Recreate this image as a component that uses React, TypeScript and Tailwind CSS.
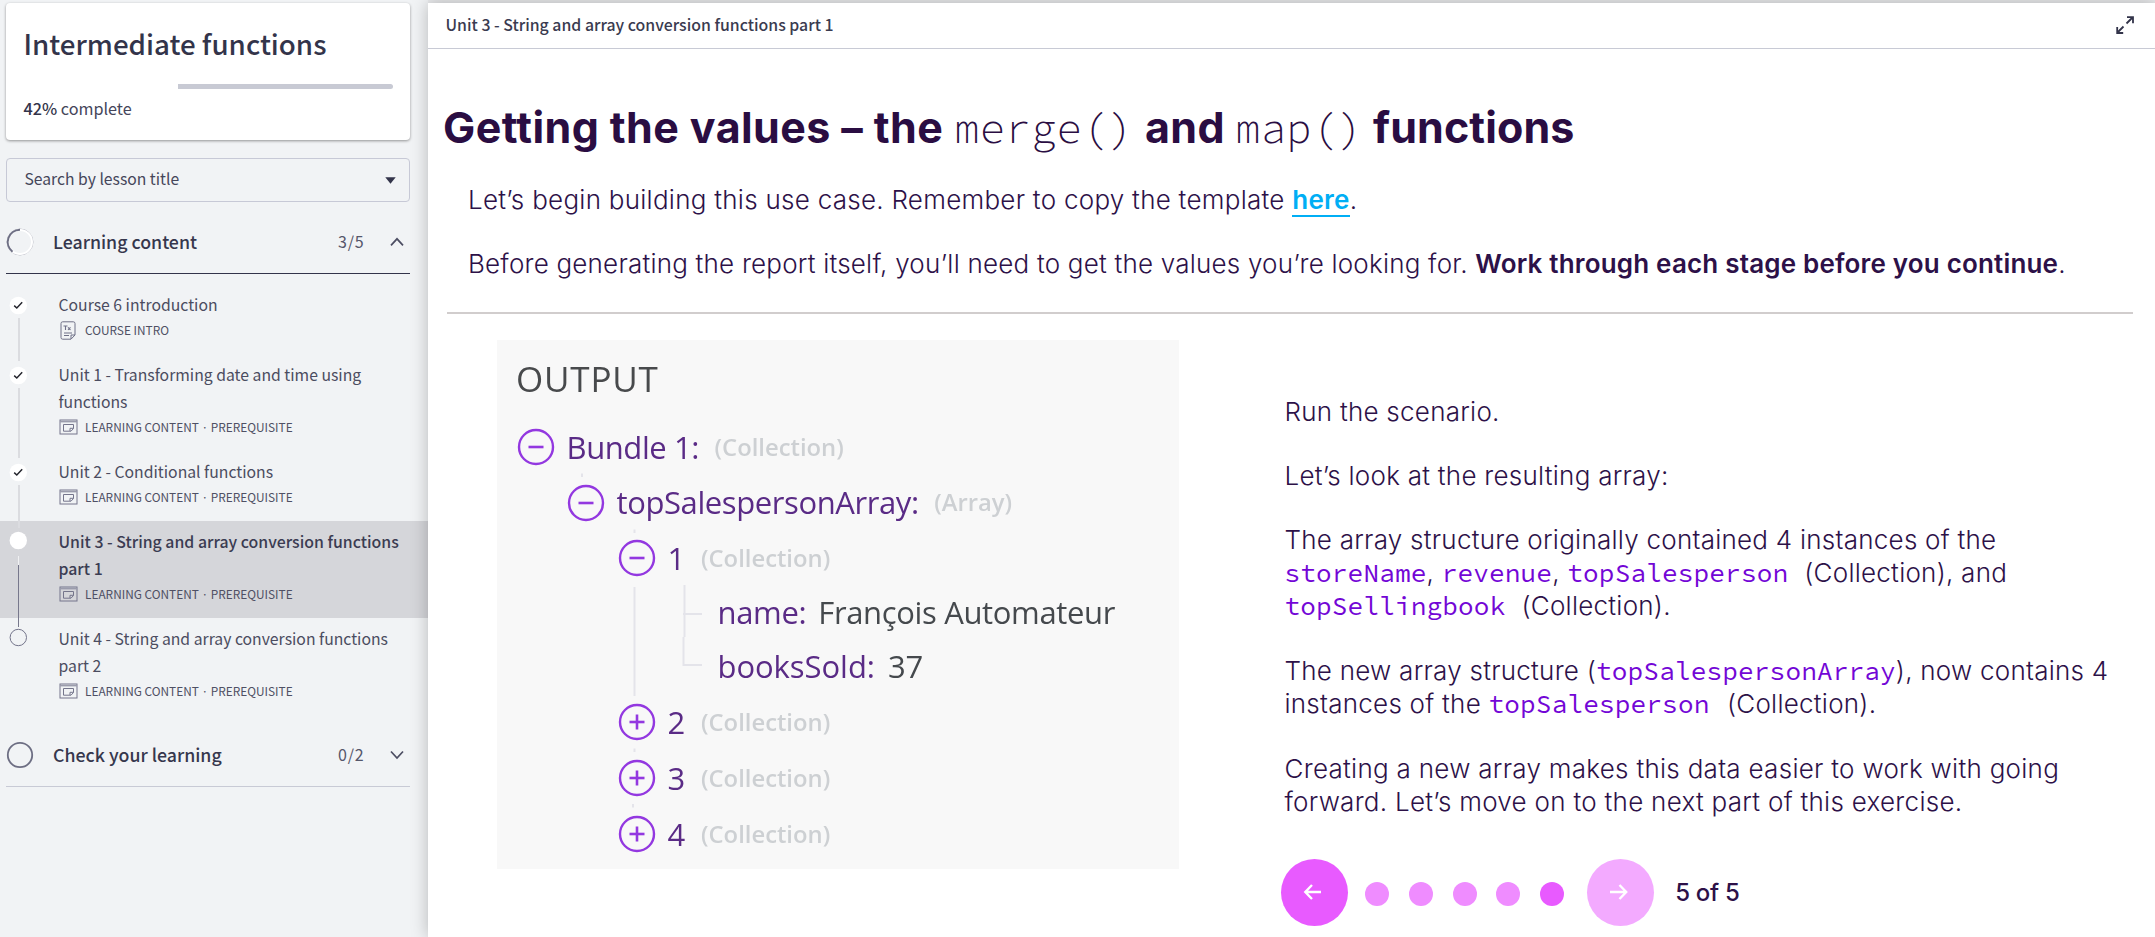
import { ReactNode } from "react";

const sans = "font-['Noto_Sans_CJK_JP','Noto_Sans',sans-serif]";
const inter = "font-['Inter',sans-serif]";
const mono = "font-['Source_Code_Pro','Noto_Sans_Mono','Liberation_Mono',monospace]";

type Status = "done" | "current" | "todo";
type Lesson = { lines: string[]; label: string; status: Status; intro?: boolean };

const lessons: Lesson[] = [
  { lines: ["Course 6 introduction"], label: "COURSE INTRO", status: "done", intro: true },
  { lines: ["Unit 1 - Transforming date and time using", "functions"], label: "LEARNING CONTENT · PREREQUISITE", status: "done" },
  { lines: ["Unit 2 - Conditional functions"], label: "LEARNING CONTENT · PREREQUISITE", status: "done" },
  { lines: ["Unit 3 - String and array conversion functions", "part 1"], label: "LEARNING CONTENT · PREREQUISITE", status: "current" },
  { lines: ["Unit 4 - String and array conversion functions", "part 2"], label: "LEARNING CONTENT · PREREQUISITE", status: "todo" },
];

function DocIcon() {
  return (
    <svg width="16" height="19" viewBox="0 0 16 19" fill="none" stroke="#6f7087" strokeWidth="1">
      <path d="M1 2.5Q1 .8 2.7 .8H13.3Q15 .8 15 2.5V14L11 18.2H2.7Q1 18.2 1 16.5Z" />
      <path d="M11 18V14H15M4 12H12M4 14.5H9" />
      <path d="M3.5 5H7.5M5.5 5V9M8 6.3L10.5 9M10.5 6.3L8 9" strokeWidth="1.1" />
    </svg>
  );
}

function WindowIcon() {
  return (
    <svg width="19" height="16" viewBox="0 0 19 16" fill="none" stroke="#74758b" strokeWidth="1">
      <rect x="1" y="1" width="17" height="14" />
      <path d="M1 2.6H18" strokeWidth="1.6" stroke="#9b9cac" />
      <path d="M4.500 5.500H14.500V9.500L12 12.200H4.500Z" />
      <path d="M11 12V9.300H14.500" />
    </svg>
  );
}

function StatusDot({ status }: { status: Status }) {
  return (
    <svg width="19" height="19" viewBox="0 0 19 19" fill="none">
      {status === "todo" ? (
        <circle cx="9.300" cy="9.500" r="8.200" stroke="#73748a" strokeWidth="1" />
      ) : (
        <circle cx="9.300" cy="9.500" r="8.700" fill="#fff" />
      )}
      {status === "done" && <path d="M5.200 9.600L7.800 12L13.200 6.300" stroke="#25262e" strokeWidth="1.500" />}
    </svg>
  );
}

function LessonRow({ lesson, last }: { lesson: Lesson; last: boolean }) {
  const current = lesson.status === "current";
  return (
    <li className={`flex ${lesson.lines.length > 1 ? "h-[97px]" : "h-[70px]"} ${current ? "bg-[#d5d6da]" : ""}`}>
      <div className={`relative ml-[9px] flex w-[19px] shrink-0 flex-col items-center ${current || last ? "pt-[10px]" : "pt-[12px]"}`}>
        <StatusDot status={lesson.status} />
        {!last && !current && <span className="mt-[3px] -mb-[7px] w-[2px] flex-1 bg-[#dbdce0]" />}
        {current && (
          <>
            <span className="mt-[6px] h-[9px] w-px bg-[#f0f1f3]" />
            <span className="-mb-[9px] w-px flex-1 bg-[#77788c]" />
          </>
        )}
      </div>
      <div className="ml-[30.500px] pt-[7px]">
        {lesson.lines.map((line) => (
          <div
            key={line}
            className={`leading-[27px] whitespace-nowrap ${current ? "text-[15.850px] font-medium text-[#3b3c52]" : "text-[15.750px] text-[#4b4c60]"}`}
          >
            {line}
          </div>
        ))}
        <div className="mt-[3px] flex h-[18px] items-center text-[11.850px] leading-[18px] whitespace-nowrap text-[#4f5064]">
          <span className="flex w-[26.500px] items-center">{lesson.intro ? <span className="ml-px"><DocIcon /></span> : <WindowIcon />}</span>
          <span>{lesson.label}</span>
        </div>
      </div>
    </li>
  );
}

function SectionHeader({ title, count, open }: { title: string; count: string; open: boolean }) {
  return (
    <div className={`mr-[18px] ml-[6px] flex h-[63px] items-center border-b ${open ? "border-[#33344a]" : "border-[#c8cad5]"}`}>
      <svg width="28" height="28" viewBox="0 0 28 28" fill="none">
        {open ? (
          <>
            <circle cx="14" cy="14" r="13" stroke="#a9aab6" strokeWidth=".8" />
            <circle cx="14" cy="14" r="12" stroke="#fff" strokeWidth="2" />
            <path d="M14 1.700A12.300 12.300 0 0 0 6.500 23.700" stroke="#6d6e83" strokeWidth="2" />
          </>
        ) : (
          <circle cx="14" cy="14" r="12.200" stroke="#6d6e83" strokeWidth="1.800" />
        )}
      </svg>
      <span className="ml-[19px] flex-1 pb-[2px] text-[17.750px] leading-6 font-medium text-[#36374d]">{title}</span>
      <span className="w-[52px] pb-[2px] text-[16px] leading-6 tracking-[0.800px] text-[#55566a]">{count}</span>
      <svg width="14" height="10" viewBox="0 0 14 10" fill="none" stroke="#4c4d62" strokeWidth="1.700" className="mr-[6px]">
        {open ? <path d="M1 8.300L7 1.800L13 8.300" /> : <path d="M1 1.500L7 8L13 1.500" />}
      </svg>
    </div>
  );
}

function Sidebar() {
  return (
    <aside className={`flex h-full w-[428px] shrink-0 flex-col bg-[#f1f3f5] ${sans}`}>
      <section className="mt-[3px] mr-[18px] ml-[6px] h-[137px] rounded-[4px] bg-white pt-[22px] pr-[17px] pl-[17.500px] shadow-[0_1px_3px_rgba(0,0,0,0.4)]">
        <h1 className="text-[27.700px] leading-9 font-medium whitespace-nowrap text-[#33344a]">Intermediate functions</h1>
        <div className="mt-[23px] flex h-[5px] justify-end">
          <div className="w-[215px] rounded-r-full bg-[#c8cad4]" />
        </div>
        <p className="mt-[7px] text-[16.200px] leading-6 text-[#45465a]">
          <span className="font-medium text-[#33344a]">42%</span> complete
        </p>
      </section>
      <div className="mt-[18px] mr-[18px] ml-[6px] flex h-[44px] items-center justify-between rounded-[4px] border border-[#c7c9d6] pr-[13px] pb-[2px] pl-[17.500px] text-[15.700px] text-[#45465a]">
        <span>Search by lesson title</span>
        <svg width="11" height="7" viewBox="0 0 11 7" className="mt-[2px]"><path d="M.3 .3H10.700L5.500 6.700Z" fill="#33344a" /></svg>
      </div>
      <div className="mt-[9px]">
        <SectionHeader title="Learning content" count="3/5" open />
      </div>
      <ul className="mt-[10px]">
        {lessons.map((l, i) => (
          <LessonRow key={i} lesson={l} last={i === lessons.length - 1} />
        ))}
      </ul>
      <div className="mt-[9px]">
        <SectionHeader title="Check your learning" count="0/2" open={false} />
      </div>
    </aside>
  );
}

function Toggle({ open }: { open: boolean }) {
  return (
    <svg width="38" height="38" viewBox="0 0 38 38" fill="none" stroke="#9338e0" strokeWidth="2.400" className="shrink-0">
      <circle cx="19" cy="19" r="17" />
      <path d="M11.500 19H26.500" strokeWidth="2.600" />
      {!open && <path d="M19 11.500V26.500" strokeWidth="2.600" />}
    </svg>
  );
}

function Node({ indent, name, type, open, narrow }: { indent: string; name: string; type: string; open: boolean; narrow?: boolean }) {
  return (
    <div className={`flex h-[55.800px] items-center ${indent}`}>
      <Toggle open={open} />
      <span className={`ml-[12px] text-[31px] tracking-[-0.400px] whitespace-nowrap text-[#5a2b86] ${narrow ? "w-[33.500px]" : "mr-[15.500px]"}`}>{name}</span>
      <span className="pt-[1px] text-[23.800px] font-semibold whitespace-nowrap text-[#cdd0d3]">{type}</span>
    </div>
  );
}

function OutputTree() {
  return (
    <section className="relative h-[529px] w-[682px] bg-[#f8f8f8] pt-[14px] font-['Open_Sans','Noto_Sans',sans-serif] blur-[0.500px]">
      <div className="ml-[19.500px] h-[65px] text-[35px] leading-[50px] tracking-[0.800px] text-[#484a4c]">OUTPUT</div>
      <Node indent="ml-[20px]" name="Bundle 1:" type="(Collection)" open />
      <Node indent="ml-[70px]" name="topSalespersonArray:" type="(Array)" open />
      <Node indent="ml-[121px]" name="1" type="(Collection)" open narrow />
      <div className="ml-[221px] flex h-[51px] items-center gap-[12px] text-[31px] tracking-[-0.350px] whitespace-nowrap">
        <span className="text-[#5a2b86]">name:</span>
        <span className="text-[#45494d]">François Automateur</span>
      </div>
      <div className="ml-[221px] flex h-[57px] items-center gap-[13px] text-[31px] tracking-[-0.050px] whitespace-nowrap">
        <span className="text-[#5a2b86]">booksSold:</span>
        <span className="text-[#45494d]">37</span>
      </div>
      <Node indent="ml-[121px]" name="2" type="(Collection)" open={false} narrow />
      <Node indent="ml-[121px]" name="3" type="(Collection)" open={false} narrow />
      <Node indent="ml-[121px]" name="4" type="(Collection)" open={false} narrow />
      <svg className="absolute inset-0" width="682" height="529" fill="none" stroke="#e4e4ea" strokeWidth="2">
        <path d="M137.500 247V356M187.500 245V297M186.500 297V325H205M186 274H205" />
        <path d="M85 133.500V137M137.500 189.500V193M137.500 408.500V412M136 464V467.500" />
      </svg>
    </section>
  );
}

function Code({ children }: { children: ReactNode }) {
  return <span className={`${mono} font-normal tracking-[0.180px] text-[#7306d6]`}>{children}</span>;
}

function Pager() {
  return (
    <div className="flex h-[67px] items-center">
      <span className="flex size-[67px] items-center justify-center rounded-full bg-[#e85aff]">
        <svg width="20" height="18" viewBox="0 0 20 18" fill="none" stroke="#fff" strokeWidth="2.400" className="-mt-[2px] -ml-[3px]"><path d="M18 9H2.500M9 2L2.300 9L9 16" /></svg>
      </span>
      <div className="ml-[17.500px] flex gap-[19.800px] pt-[3px]">
        {[0, 1, 2, 3, 4].map((n) => (
          <span key={n} className={`size-[24px] rounded-full ${n === 4 ? "bg-[#e85aff]" : "bg-[#ef8cff]"}`} />
        ))}
      </div>
      <span className="ml-[22.500px] flex size-[67px] items-center justify-center rounded-full bg-[#f3aaff]">
        <svg width="20" height="18" viewBox="0 0 20 18" fill="none" stroke="#fff" strokeWidth="2.400" className="-mt-[2px] -ml-[2px]"><path d="M1 9H17M10.500 2L17.200 9L10.500 16" /></svg>
      </span>
      <span className="ml-[21.500px] text-[24px] leading-8 font-medium tracking-[-0.300px] whitespace-nowrap text-[#2d1148]">5 of 5</span>
    </div>
  );
}

function Content() {
  return (
    <main className={`relative flex min-w-0 flex-1 flex-col bg-white text-[#2d1148] shadow-[0_0_16px_rgba(0,0,0,0.25)] ${inter}`}>
      <header className={`flex h-[46px] shrink-0 items-center justify-between border-b border-[#c8cad5] pr-[21px] pl-[17.500px] ${sans}`}>
        <span className="pb-[1px] text-[15.850px] font-medium whitespace-nowrap text-[#3a3b50]">Unit 3 - String and array conversion functions part 1</span>
        <svg width="18" height="18" viewBox="0 0 18 18" fill="none" stroke="#33344a" strokeWidth="1.800" className="-mt-[2px]">
          <path d="M10.500 7.500L16.500 1.500M11 1.200H17V7.200M7.500 10.500L1.500 16.500M1.200 11V17H7.200" />
        </svg>
      </header>
      <h2 className="mt-[53px] ml-[15px] flex h-[50px] items-baseline text-[43px] leading-[50px] font-bold tracking-[0.400px] whitespace-nowrap text-[#2a0d42]">
        <span className="w-[511px]">Getting the values – the</span>
        <span className={`w-[191px] text-[42px] font-[350] tracking-[0.450px] ${mono}`}>merge()</span>
        <span className="w-[90px]">and</span>
        <span className={`w-[138px] text-[42px] font-[350] tracking-[0.450px] ${mono}`}>map()</span>
        <span className="tracking-[0.100px]">functions</span>
      </h2>
      <div className="mt-[16px] ml-[40px] text-[26px] leading-[64px] font-light whitespace-nowrap">
        <p className="tracking-[0.265px]">
          Let’s begin building this use case. Remember to copy the template{" "}
          <a className="border-b-2 border-[#00aef5] font-semibold text-[#00aef5]">here</a>.
        </p>
        <p className="tracking-[0.210px]">
          Before generating the report itself, you’ll need to get the values you’re looking for.{" "}
          <span className="font-semibold tracking-[0.180px]">Work through each stage before you continue</span>.
        </p>
      </div>
      <div className="mt-[16px] mr-[22px] ml-[19px] h-[2px] shrink-0 bg-[#d1cdcd]" />
      <div className="flex">
        <div className="mt-[26px] ml-[68.500px]"><OutputTree /></div>
        <div className="mt-[81px] ml-[106px]">
          <div className="text-[26px] leading-[33px] font-light tracking-[0.250px] whitespace-nowrap">
            <p>Run the scenario.</p>
            <p className="mt-[31px]">Let’s look at the resulting array:</p>
            <p className="mt-[31px]">
              The array structure originally contained 4 instances of the<br />
              <Code>storeName</Code>, <Code>revenue</Code>, <Code>topSalesperson</Code><span className="ml-[16px]">(Collection), and</span><br />
              <Code>topSellingbook</Code><span className="ml-[16px]">(Collection).</span>
            </p>
            <p className="mt-[32px]">
              The new array structure (<Code>topSalespersonArray</Code>), now contains 4<br />
              instances of the <Code>topSalesperson</Code><span className="ml-[17.500px]">(Collection).</span>
            </p>
            <p className="mt-[33px] leading-[32.500px] tracking-[0.280px]">
              Creating a new array makes this data easier to work with going<br />
              forward. Let’s move on to the next part of this exercise.
            </p>
          </div>
          <div className="mt-[41px] -ml-[4px]"><Pager /></div>
        </div>
      </div>
    </main>
  );
}

export default function App() {
  return (
    <div className="flex h-[937px] w-[2155px] overflow-hidden bg-[#f1f3f5]">
      <Sidebar />
      <div className="flex min-w-0 flex-1 bg-[#e9eaec] pt-[3px]">
        <Content />
      </div>
    </div>
  );
}
